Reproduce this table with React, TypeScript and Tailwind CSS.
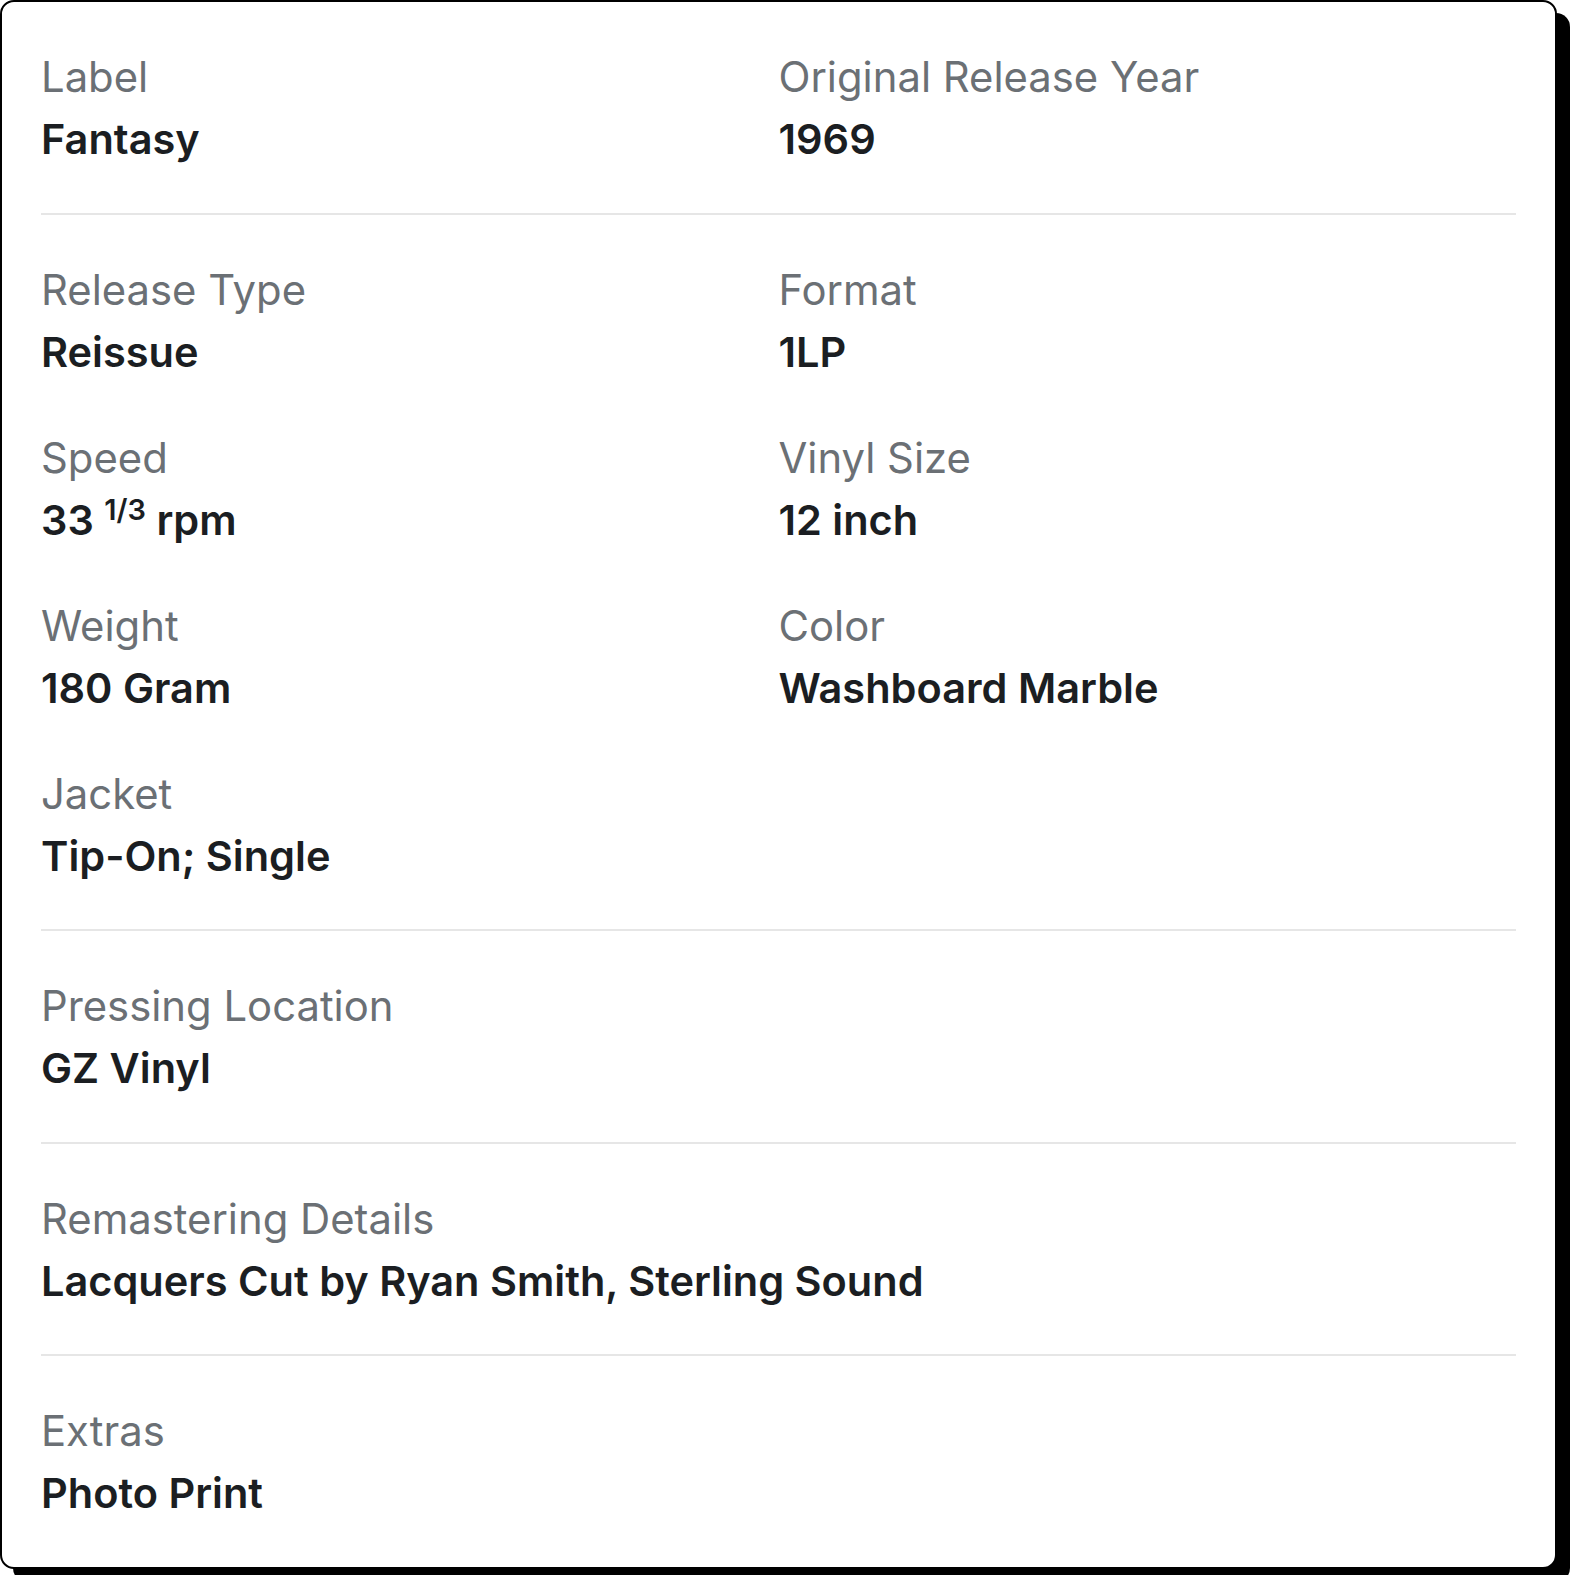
import type { ReactNode } from "react";

type Spec = { label: string; value: ReactNode; wide?: boolean };

const Field = ({ label, value, wide }: Spec) => (
	<div className={wide ? "col-span-2 flex flex-col" : "flex flex-col"}>
		<span className="text-[41.8px] leading-[62px] font-normal text-[#6b7075]">
			{label}
		</span>
		<span className="text-[41.5px] leading-[62px] font-semibold text-[#1b1e22]">
			{value}
		</span>
	</div>
);

const Divider = () => <div className="h-[2px] w-full bg-[#e6e6e6]" />;

const Section = ({ children }: { children: ReactNode }) => (
	<div className="grid grid-cols-2 gap-y-[44px] pt-[44px] pb-[42.5px]">
		{children}
	</div>
);

export default function App() {
	return (
		<div className="min-h-screen bg-white font-['Inter',sans-serif]">
			<div className="w-[1557px] rounded-[14px] border-2 border-black bg-white px-[39px] shadow-[13px_13px_0_0_#000]">
				<Section>
					<Field label="Label" value="Fantasy" />
					<Field label="Original Release Year" value="1969" />
				</Section>
				<Divider />
				<Section>
					<Field label="Release Type" value="Reissue" />
					<Field label="Format" value="1LP" />
					<Field
						label="Speed"
						value={
							<>
								33 <sup className="text-[29px]">1/3</sup> rpm
							</>
						}
					/>
					<Field label="Vinyl Size" value="12 inch" />
					<Field label="Weight" value="180 Gram" />
					<Field label="Color" value="Washboard Marble" />
					<Field label="Jacket" value="Tip-On; Single" />
				</Section>
				<Divider />
				<Section>
					<Field label="Pressing Location" value="GZ Vinyl" wide />
				</Section>
				<Divider />
				<Section>
					<Field
						label="Remastering Details"
						value="Lacquers Cut by Ryan Smith, Sterling Sound"
						wide
					/>
				</Section>
				<Divider />
				<Section>
					<Field label="Extras" value="Photo Print" wide />
				</Section>
			</div>
		</div>
	);
}
